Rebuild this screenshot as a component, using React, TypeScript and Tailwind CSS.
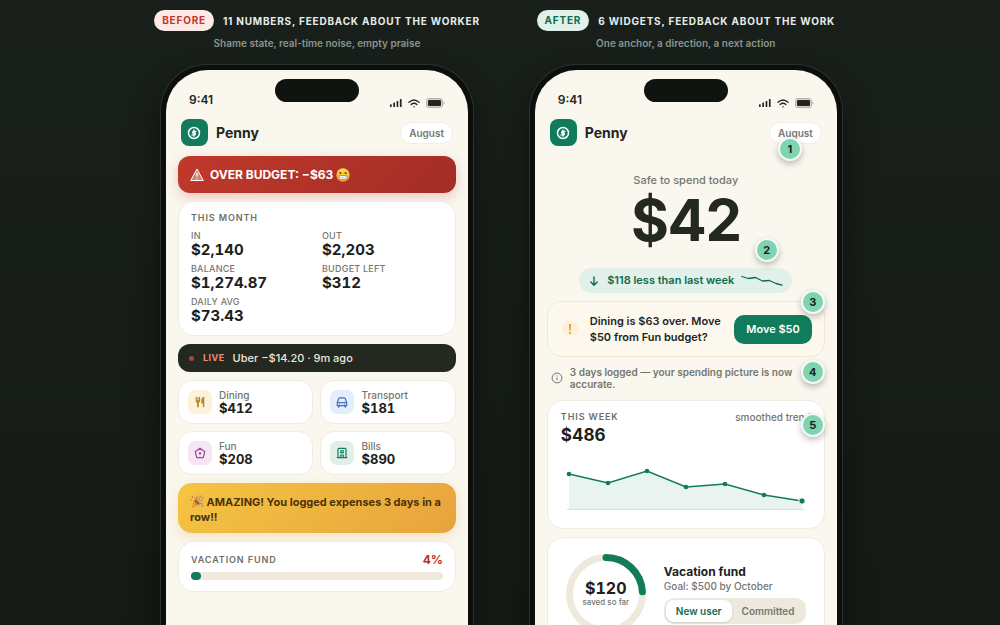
import React, { FC, ReactNode } from "react";

const categories = [
  { name: "Dining", amount: "$412", tone: "bg-[#fdf1dc] text-[#bd8620]" },
  { name: "Transport", amount: "$181", tone: "bg-[#e3edfb] text-[#3f6fc0]" },
  { name: "Fun", amount: "$208", tone: "bg-[#f6e5f4] text-[#a3419b]" },
  { name: "Bills", amount: "$890", tone: "bg-[#e0efe8] text-[#0f8059]" },
];

const monthStats = [
  { label: "IN", value: "$2,140" },
  { label: "OUT", value: "$2,203" },
  { label: "BALANCE", value: "$1,274.87" },
  { label: "BUDGET LEFT", value: "$312" },
  { label: "DAILY AVG", value: "$73.43" },
];

const weekPoints = [
  [8, 24],
  [47, 33],
  [86, 21],
  [125, 37],
  [164, 34],
  [203, 45],
  [241, 51],
];

const CategoryIcon: FC<{ name: string }> = ({ name }) => {
  if (name === "Dining") {
    return (
      <svg viewBox="0 0 12 12" className="w-3 h-3" fill="currentColor" aria-hidden="true">
        <path d="M1.600 1h1.100v3.200h.6V1h1.100v3.200H5V1h1.100v4c0 .9-.6 1.500-1.300 1.700v4.500H3V6.700C2.200 6.500 1.600 5.900 1.600 5z" />
        <path d="M10.300 .8v10.400H8.900V7.400H7.200V4.500c0-2 1.200-3.500 3.100-3.700z" />
      </svg>
    );
  }
  if (name === "Transport") {
    return (
      <svg viewBox="0 0 12 12" className="w-3 h-3" fill="none" stroke="currentColor" strokeWidth="1.200" strokeLinejoin="round" aria-hidden="true">
        <path d="M1.300 9.600V6.800L2.600 2.900Q3 1.800 4.200 1.800h3.600q1.200 0 1.600 1.100l1.300 3.900v2.800z" />
        <path d="M1.500 6.700h9" />
        <path d="M2.700 10v.7M9.300 10v.7" strokeWidth="1.800" strokeLinecap="round" />
        <path d="M3.100 8.200h.9M8 8.200h.9" strokeWidth=".9" />
      </svg>
    );
  }
  if (name === "Fun") {
    return (
      <svg viewBox="0 0 12 12" className="w-3 h-3" fill="none" stroke="currentColor" strokeWidth="1.200" strokeLinejoin="round" aria-hidden="true">
        <path d="M6 1.200 10.800 4.800 9.200 10.600H2.800L1.200 4.800z" />
        <circle cx="6" cy="6.400" r="1.200" fill="currentColor" stroke="none" />
      </svg>
    );
  }
  return (
    <svg viewBox="0 0 12 12" className="w-3 h-3" fill="none" stroke="currentColor" strokeWidth="1.200" strokeLinejoin="round" aria-hidden="true">
      <path d="M2 10.500V2.300q0-.9.900-.9h6.200q.9 0 .9.900v8.200M.8 10.700h10.400" />
      <path d="M4 3.800h4M4 5.700h4M4.700 10.500V8h2.600v2.500" />
    </svg>
  );
};

const GrimaceFace: FC = () => (
  <svg viewBox="0 0 16 16" className="inline-block w-3.5 h-3.5" role="img" aria-label="grimacing face">
    <defs>
      <linearGradient id="face" x1="0" y1="0" x2="0" y2="1">
        <stop offset="0" stopColor="#ffe04a" />
        <stop offset="1" stopColor="#f3a228" />
      </linearGradient>
    </defs>
    <circle cx="8" cy="8" r="7.600" fill="url(#face)" />
    <circle cx="5" cy="5.800" r="1.100" fill="#5d3a10" />
    <circle cx="11" cy="5.800" r="1.100" fill="#5d3a10" />
    <rect x="3" y="8.600" width="10" height="4.400" rx="2.100" fill="#fff" stroke="#8a6a3a" strokeWidth=".7" />
    <path d="M3.200 10.800h9.600M5.500 8.800v4M8 8.800v4M10.500 8.800v4" stroke="#b7a68a" strokeWidth=".4" />
  </svg>
);

const PartyPopper: FC = () => (
  <svg viewBox="0 0 16 16" className="inline-block w-3.5 h-3.5 align-text-bottom" role="img" aria-label="party popper">
    <path d="M1 15.200 5.200 5.500 10.600 11z" fill="#f0b429" />
    <path d="M2.200 12.500 4.600 14M3.500 9.400l4 3.400M4.600 7l4.200 4.700" stroke="#c56a32" strokeWidth="1" />
    <ellipse cx="8" cy="8.200" rx="1.500" ry="3.900" transform="rotate(-45 8 8.200)" fill="#a45a3a" />
    <path d="M7 6.200C8.500 4.500 7 3 8.300 1" stroke="#d9503f" strokeWidth="1.100" fill="none" />
    <path d="M9.500 8.500C11 6.500 12 8 13.200 6s1.300-1.500 2-1.300" stroke="#4b8fd8" strokeWidth="1.100" fill="none" />
    <path d="M10.500 10c1.500-1 2.500.8 4.500.2M9 6.500 12.300 2" stroke="#c94f93" strokeWidth="1" fill="none" />
    <path d="M2 1.500h1.500V3H2zM11 .7h1.300V2H11z" fill="#e0564a" />
    <path d="M4.800 3h1.200v1.200H4.800zM13.500 12h1.400v1.400h-1.400z" fill="#5b9e57" />
    <path d="M14 2h1.300v1.300H14zM.8 5.200H2v1.200H.8z" fill="#5a86d6" />
  </svg>
);

const StatusBar: FC = () => (
  <div className="relative flex items-end justify-between h-[38px] px-[23px]">
    <div className="absolute left-1/2 top-[9px] w-[84px] h-[23px] -translate-x-1/2 rounded-full bg-[#10130f]" />
    <span className="text-xs leading-4 font-semibold text-[#22261f]">9:41</span>
    <div className="flex items-center gap-1.5 text-[#22261f]">
      <svg viewBox="0 0 12 8" className="w-3 h-2" fill="currentColor" aria-hidden="true">
        <rect x="0" y="5.200" width="1.700" height="2.800" rx=".5" />
        <rect x="3.300" y="3.600" width="1.700" height="4.400" rx=".5" />
        <rect x="6.600" y="1.900" width="1.700" height="6.100" rx=".5" />
        <rect x="9.900" y="0" width="1.700" height="8" rx=".5" />
      </svg>
      <svg viewBox="0 0 12 9" className="w-3 h-[9px]" fill="none" stroke="currentColor" strokeWidth="1.300" strokeLinecap="round" aria-hidden="true">
        <path d="M1 3.300Q6-1.400 11 3.300M3.100 5.500Q6 2.900 8.900 5.500" />
        <circle cx="6" cy="7.700" r=".7" fill="currentColor" stroke="none" />
      </svg>
      <svg viewBox="0 0 19 10" className="w-[19px] h-2.5" aria-hidden="true">
        <rect x=".5" y=".5" width="16" height="9" rx="2.500" fill="#d6d5cc" stroke="#b4b4ab" />
        <rect x="2" y="2" width="13" height="6" rx="1.200" fill="#22261f" />
        <path d="M17.600 3.500v3q1-.4 1-1.500t-1-1.500z" fill="#a9a9a0" />
      </svg>
    </div>
  </div>
);

const AppHeader: FC = () => (
  <header className="flex items-center justify-between mt-[11px] px-[15px]">
    <div className="flex items-center gap-2">
      <span className="flex items-center justify-center w-[27px] h-[27px] rounded-lg bg-[#107c5b] text-white">
        <svg viewBox="0 0 14 14" className="w-3.5 h-3.5" fill="none" stroke="currentColor" aria-hidden="true">
          <circle cx="7" cy="7" r="5.500" strokeWidth="1.500" />
          <path d="M8.900 5.500H6.200a.9.9 0 0 0 0 1.700h1.600a.9.9 0 0 1 0 1.700H5M7 4v6.200" strokeWidth="1.300" strokeLinecap="round" />
        </svg>
      </span>
      <span className="text-sm leading-5 font-bold text-[#22261f]">Penny</span>
    </div>
    <span className="rounded-full border border-[#f0eee5] bg-white px-2 py-px text-[10px] leading-[18px] font-semibold text-[#74766f]">
      August
    </span>
  </header>
);

interface PhoneProps {
  badge: string;
  badgeTone: string;
  title: string;
  subtitle: string;
  children: ReactNode;
}

const PhoneColumn: FC<PhoneProps> = ({ badge, badgeTone, title, subtitle, children }) => (
  <section className="flex flex-col items-center">
    <div className="flex items-center gap-[9px]">
      <span className={`rounded-full px-2 text-[10px] leading-[21px] font-bold tracking-[0.08em] ${badgeTone}`}>
        {badge}
      </span>
      <h2 className="text-[10px] leading-4 font-bold tracking-[0.08em] text-[#e8ece8]">{title}</h2>
    </div>
    <p className="mt-1 text-[10px] leading-4 font-semibold text-[#8a958d]">{subtitle}</p>
    <div className="flex flex-col grow w-[314px] mt-[13px] rounded-t-[47px] border border-b-0 border-[#2b322d] bg-[#0c0f0c] px-[5px] pt-[5px] shadow-[0_16px_32px_rgba(0,0,0,0.4)]">
      <div className="flex flex-col grow rounded-t-[42px] bg-[#faf7ee] pb-6">
        <StatusBar />
        <AppHeader />
        {children}
      </div>
    </div>
  </section>
);

const Marker: FC<{ n: number; className: string }> = ({ n, className }) => (
  <span
    className={`absolute z-10 flex items-center justify-center w-6 h-6 rounded-full border-2 border-[#f3fbf6] bg-[#7fd3b0] text-[11px] font-bold text-[#10241b] shadow-[0_3px_6px_rgba(0,0,0,0.25)] ${className}`}
  >
    {n}
  </span>
);

const BeforeScreen: FC = () => (
  <div className="flex flex-col gap-2 mt-2.5 px-3">
    <div className="flex items-center gap-1.5 h-[37px] rounded-xl bg-linear-[135deg] from-[#c0392b] to-[#a32d26] px-3 text-xs font-bold text-white shadow-[0_4px_12px_rgba(192,57,43,0.25)]">
      <svg viewBox="0 0 14 14" className="w-3.5 h-3.5" fill="none" stroke="currentColor" strokeWidth="1" strokeLinejoin="round" aria-hidden="true">
        <path d="M7 1 13.300 12.500H.7z" fill="#d57f75" />
        <path d="M7 4.800v4M7 10.200v1" strokeWidth="1.300" />
      </svg>
      <span className="flex items-center gap-[3px]">
        OVER BUDGET: −$63 <GrimaceFace />
      </span>
    </div>

    <div className="rounded-2xl border border-[#efece1] bg-white px-3 pt-2.5 pb-2">
      <h3 className="text-[9px] leading-3 font-semibold tracking-widest text-[#6c6f68]">THIS MONTH</h3>
      <dl className="grid grid-cols-2 gap-x-2.5 gap-y-0.5 mt-1.5">
        {monthStats.map((stat) => (
          <div key={stat.label}>
            <dt className="text-[9px] leading-3 font-medium tracking-wide text-[#74766f]">{stat.label}</dt>
            <dd className="pb-[3px] text-[15px] leading-4 font-bold tabular-nums text-[#1d211c]">{stat.value}</dd>
          </div>
        ))}
      </dl>
    </div>

    <div className="flex items-center h-7 rounded-xl bg-[#232820] px-[11px] text-[11px] font-medium text-[#e9e8df]">
      <span className="w-[5px] h-[5px] rounded-full bg-[#a8443a]" />
      <span className="ml-[9px] mr-2 text-[9px] font-bold tracking-wider text-[#f08a78]">LIVE</span>
      Uber −$14.20 · 9m ago
    </div>

    <ul className="grid grid-cols-2 gap-[7px]">
      {categories.map((category) => (
        <li key={category.name} className="flex items-center gap-[7px] h-11 rounded-[14px] border border-[#efece1] bg-white px-[9px]">
          <span className={`flex items-center justify-center w-6 h-6 rounded-[7px] ${category.tone}`}>
            <CategoryIcon name={category.name} />
          </span>
          <div>
            <p className="text-[10px] leading-3 font-medium text-[#74766f]">{category.name}</p>
            <p className="text-[13px] leading-[14px] font-bold tabular-nums text-[#1d211c]">{category.amount}</p>
          </div>
        </li>
      ))}
    </ul>

    <p className="rounded-[14px] bg-linear-[135deg] from-[#f4c542] to-[#e8a33d] px-3 pt-3 pb-2 text-[11px] leading-[15px] font-bold text-[#4d3208] shadow-[0_4px_12px_rgba(232,163,61,0.25)]">
      <PartyPopper /> AMAZING! You logged expenses 3 days in a row!!
    </p>

    <div className="rounded-2xl border border-[#efece1] bg-white px-3 pt-2.5 pb-[11px]">
      <div className="flex items-center justify-between">
        <h3 className="text-[9px] leading-4 font-semibold tracking-widest text-[#6c6f68]">VACATION FUND</h3>
        <span className="text-xs leading-4 font-bold text-[#b8322a]">4%</span>
      </div>
      <div className="mt-1 h-2 rounded-full bg-[#efeadd]">
        <div className="h-2 rounded-full bg-[#107c5b]" style={{ width: "4%" }} />
      </div>
    </div>
  </div>
);

const WeekChart: FC = () => {
  const line = weekPoints.map(([x, y]) => `${x},${y}`).join(" ");
  return (
    <svg viewBox="0 0 250 68" className="block w-full mt-[5px]" role="img" aria-label="Spending this week">
      <polygon points={`8,59 ${line} 241,59`} fill="#e9f3ef" />
      <path d="M6 59.500H243" stroke="#dcdfd8" />
      <polyline points={line} fill="none" stroke="#107c5b" strokeWidth="1.600" />
      {weekPoints.map(([x, y], i) => (
        <circle
          key={x}
          cx={x}
          cy={y}
          r={i === weekPoints.length - 1 ? 3.2 : 2.3}
          fill="#107c5b"
          stroke="#fff"
          strokeWidth={i === weekPoints.length - 1 ? 1 : 0}
        />
      ))}
    </svg>
  );
};

const AfterScreen: FC = () => (
  <div className="relative flex flex-col px-3">
    <Marker n={1} className="right-[35px] -top-[9px]" />

    <div className="relative flex flex-col items-center pt-[26px]">
      <p className="text-[11px] leading-4 font-medium text-[#74766f]">Safe to spend today</p>
      <p className="mt-1 text-[58px] leading-[56px] font-bold tracking-tight text-[#232820]">$42</p>
      <Marker n={2} className="right-[46px] top-[92px]" />
      <div className="flex items-center gap-[7px] mt-5 h-[25px] rounded-full bg-[#e2f0ea] px-[9px] text-[11px] font-semibold text-[#0f6b4e]">
        <svg viewBox="0 0 12 12" className="w-3 h-3" fill="none" stroke="currentColor" strokeWidth="1.400" strokeLinecap="round" strokeLinejoin="round" aria-hidden="true">
          <path d="M6 2v8M2.800 7 6 10.200 9.200 7" />
        </svg>
        $118 less than last week
        <svg viewBox="0 0 42 12" className="w-[42px] h-3" fill="none" stroke="currentColor" strokeWidth="1.300" strokeLinecap="round" strokeLinejoin="round" aria-hidden="true">
          <path d="M.8 1.500 7.500 3.500 14.500 2.500 21.500 6 28.500 5.500 35 8.500 41 10.200" />
        </svg>
      </div>
    </div>

    <div className="relative flex items-center h-14 mt-2 rounded-[14px] border border-[#f5e6d2] bg-[#fdf8ee] pl-[14px] pr-3">
      <span className="flex items-center justify-center shrink-0 w-4 h-4 rounded-full bg-[#fbf0da]">
        <svg viewBox="0 0 4 12" className="w-1 h-3" fill="#c08a1e" aria-hidden="true">
          <path d="M1.200 1h1.600l-.3 6.800h-1z" />
          <circle cx="2" cy="10" r=".9" />
        </svg>
      </span>
      <p className="grow ml-3 text-[11px] leading-4 font-semibold text-[#22261f]">
        Dining is $63 over. Move
        <br />
        $50 from Fun budget?
      </p>
      <button type="button" className="h-[29px] rounded-[10px] bg-[#107c5b] px-3 text-[11px] font-semibold text-white whitespace-nowrap">
        Move $50
      </button>
      <Marker n={3} className="-right-px -top-3" />
    </div>

    <div className="relative flex items-center gap-[7px] mt-[7px] pl-1 pr-5">
      <svg viewBox="0 0 12 12" className="shrink-0 w-3 h-3" fill="none" stroke="#74766f" aria-hidden="true">
        <circle cx="6" cy="6" r="4.900" />
        <path d="M6 5.400v3M6 3.300v1" />
      </svg>
      <p className="py-0.5 text-[10px] leading-3 font-semibold text-[#74766f]">
        3 days logged — your spending picture is now accurate.
      </p>
      <Marker n={4} className="right-0 -top-1" />
    </div>

    <div className="relative mt-2 rounded-2xl border border-[#efece1] bg-white px-[13px] pt-2.5">
      <div className="flex items-center justify-between">
        <h3 className="text-[9px] leading-3 font-semibold tracking-widest text-[#6c6f68]">THIS WEEK</h3>
        <span className="text-[10px] leading-3 font-medium text-[#74766f]">smoothed trend</span>
      </div>
      <p className="mt-0.5 text-[17px] leading-5 font-bold text-[#1d211c]">$486</p>
      <WeekChart />
      <div className="h-2.5" />
      <Marker n={5} className="-right-px top-3" />
    </div>

    <div className="flex items-center gap-[18px] mt-2 rounded-2xl border border-[#efece1] bg-white pl-[18px] pr-4 py-4">
      <div className="relative shrink-0 w-20 h-20">
        <svg viewBox="0 0 80 80" className="w-20 h-20" fill="none" strokeWidth="7" aria-hidden="true">
          <circle cx="40" cy="40" r="36.500" stroke="#edeadd" />
          <circle cx="40" cy="40" r="36.500" stroke="#107c5b" strokeLinecap="round" pathLength="100" strokeDasharray="24 76" transform="rotate(-90 40 40)" />
        </svg>
        <div className="absolute inset-0 flex flex-col items-center justify-center">
          <span className="text-base leading-4 font-bold tabular-nums text-[#1d211c]">$120</span>
          <span className="text-[8px] leading-3 font-medium text-[#74766f]">saved so far</span>
        </div>
      </div>
      <div>
        <h3 className="text-xs leading-4 font-bold text-[#1d211c]">Vacation fund</h3>
        <p className="text-[10px] leading-3 font-medium text-[#74766f]">Goal: $500 by October</p>
        <div className="flex mt-1.5 rounded-[10px] bg-[#edeadd] p-0.5 text-[10px] leading-[22px] font-semibold">
          <button type="button" aria-pressed="true" className="rounded-lg bg-white px-2.5 text-[#0f6b4e] shadow-sm">
            New user
          </button>
          <button type="button" aria-pressed="false" className="px-2.5 text-[#74766f]">
            Committed
          </button>
        </div>
      </div>
    </div>
  </div>
);

const App: FC = () => (
  <main className="flex justify-center gap-[49px] min-h-screen bg-linear-to-b from-[#191f1b] to-[#151a16] pt-2.5 pr-[3px] font-['Inter','Liberation_Sans',sans-serif]">
    <PhoneColumn
      badge="BEFORE"
      badgeTone="bg-[#fde9e6] text-[#c0392b]"
      title="11 NUMBERS, FEEDBACK ABOUT THE WORKER"
      subtitle="Shame state, real-time noise, empty praise"
    >
      <BeforeScreen />
    </PhoneColumn>
    <PhoneColumn
      badge="AFTER"
      badgeTone="bg-[#dff1e9] text-[#0f6b4e]"
      title="6 WIDGETS, FEEDBACK ABOUT THE WORK"
      subtitle="One anchor, a direction, a next action"
    >
      <AfterScreen />
    </PhoneColumn>
  </main>
);

export default App;
